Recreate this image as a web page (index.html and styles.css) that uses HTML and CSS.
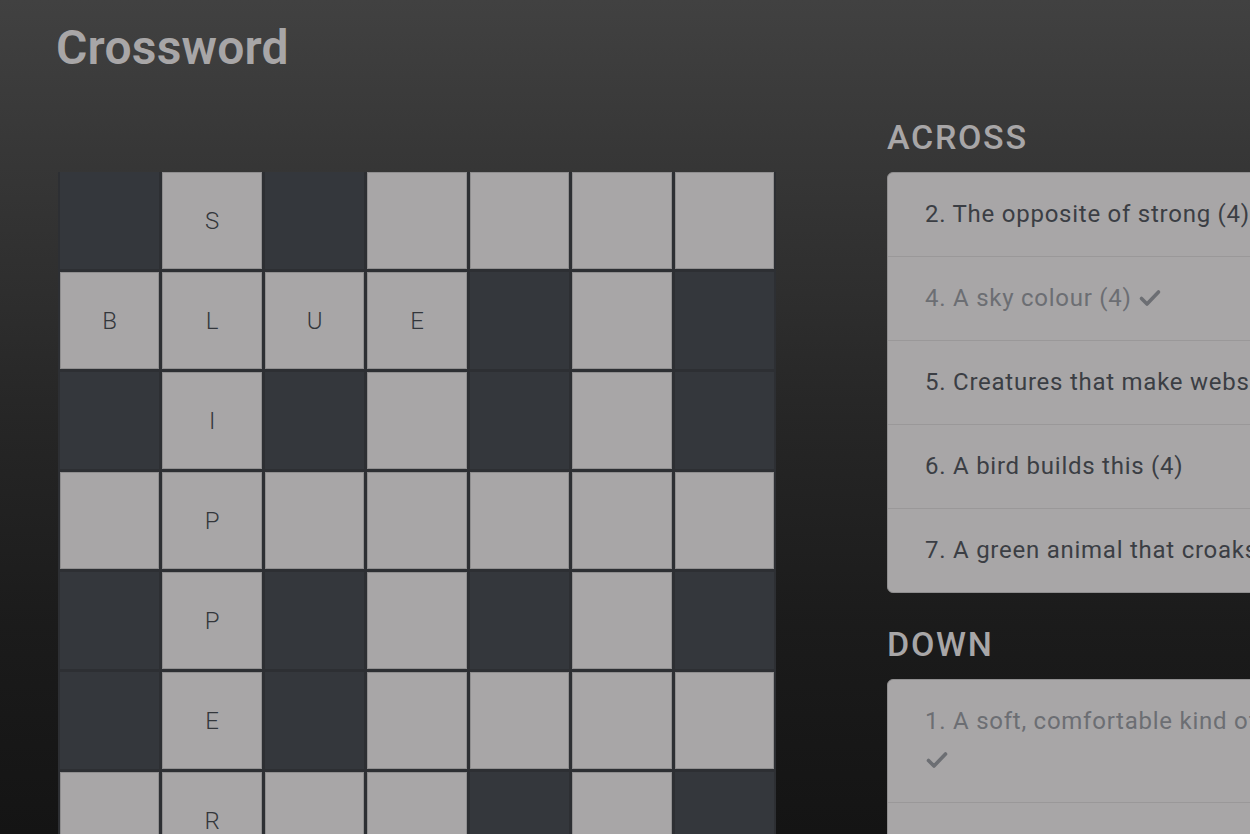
FILE: index.html
```html
<!DOCTYPE html>
<html lang="en">
<head>
<meta charset="utf-8">
<title>Crossword</title>
<link rel="stylesheet" href="styles.css">
</head>
<body>
<div class="page">
  <h1 class="title">Crossword</h1>
  <div class="main">
    <div class="board">
      <div class="cell block"></div><div class="cell">S</div><div class="cell block"></div><div class="cell"></div><div class="cell"></div><div class="cell"></div><div class="cell"></div>
      <div class="cell">B</div><div class="cell">L</div><div class="cell">U</div><div class="cell">E</div><div class="cell block"></div><div class="cell"></div><div class="cell block"></div>
      <div class="cell block"></div><div class="cell">I</div><div class="cell block"></div><div class="cell"></div><div class="cell block"></div><div class="cell"></div><div class="cell block"></div>
      <div class="cell"></div><div class="cell">P</div><div class="cell"></div><div class="cell"></div><div class="cell"></div><div class="cell"></div><div class="cell"></div>
      <div class="cell block"></div><div class="cell">P</div><div class="cell block"></div><div class="cell"></div><div class="cell block"></div><div class="cell"></div><div class="cell block"></div>
      <div class="cell block"></div><div class="cell">E</div><div class="cell block"></div><div class="cell"></div><div class="cell"></div><div class="cell"></div><div class="cell"></div>
      <div class="cell"></div><div class="cell">R</div><div class="cell"></div><div class="cell"></div><div class="cell block"></div><div class="cell"></div><div class="cell block"></div>
    </div>
    <div class="clues">
      <h2 class="clue-heading">ACROSS</h2>
      <ul class="clue-list">
        <li class="clue">2. The opposite of strong (4)</li>
        <li class="clue done">4. A sky colour (4) <svg class="check" viewBox="0 0 24 24" width="24" height="24"><path d="M3.5 12.5l5.5 5.5L20.5 6" fill="none" stroke="currentColor" stroke-width="3.6" stroke-linecap="round" stroke-linejoin="round"/></svg></li>
        <li class="clue">5. Creatures that make webs (7)</li>
        <li class="clue">6. A bird builds this (4)</li>
        <li class="clue">7. A green animal that croaks (4)</li>
      </ul>
      <h2 class="clue-heading">DOWN</h2>
      <ul class="clue-list">
        <li class="clue done">1. A soft, comfortable kind of shoe (7) <svg class="check" viewBox="0 0 24 24" width="24" height="24"><path d="M3.5 12.5l5.5 5.5L20.5 6" fill="none" stroke="currentColor" stroke-width="3.6" stroke-linecap="round" stroke-linejoin="round"/></svg></li>
        <li class="clue">3. A hot drink made from leaves (3)</li>
      </ul>
    </div>
  </div>
</div>
</body>
</html>
```

FILE: styles.css
```css
html, body {
  margin: 0;
  height: 834px;
  overflow: hidden;
}

body {
  background: linear-gradient(180deg, #414141 0%, #363636 20%, #262626 50%, #1b1b1b 75%, #141414 100%);
  font-family: Roboto, "Liberation Sans", sans-serif;
  color: #a8a6a7;
}

.page {
  padding: 20px 0 0 56px;
  width: 1400px;
}

.title {
  margin: 0;
  font-size: 48px;
  line-height: 56px;
  font-weight: 600;
  letter-spacing: 0.2px;
  color: #a8a6a7;
}

.main {
  display: flex;
  align-items: flex-start;
  gap: 111px;
  margin-top: 41px;
}

.board {
  margin-top: 55px;
  margin-left: 2px;
  width: 714px;
  padding: 0 2px 2px 2px;
  display: grid;
  grid-template-columns: repeat(7, 1fr);
  grid-auto-rows: 97px;
  gap: 3px;
  background: #2d2f33;
  flex: none;
}

.cell {
  background: #a8a6a7;
  box-shadow: inset 0 0 0 1px #8f8e8f;
  display: flex;
  align-items: center;
  justify-content: center;
  font-size: 24px;
  font-weight: 300;
  color: #33363b;
}

.cell.block {
  background: #34373c;
  box-shadow: none;
}

.clues {
  width: 528px;
  flex: none;
}

.clue-heading {
  margin: 0 0 15px;
  font-size: 34px;
  line-height: 40px;
  font-weight: 500;
  letter-spacing: 1.7px;
  color: #a8a6a7;
}

.clue-list {
  list-style: none;
  margin: 0 0 31px;
  padding: 0;
  background: #a8a6a7;
  border: 1px solid #8f8e8f;
  border-radius: 6px;
}

.clue {
  padding: 22px 37px;
  font-size: 24px;
  line-height: 39px;
  letter-spacing: 0.75px;
  color: #3b3e44;
}

.clue + .clue {
  border-top: 1px solid #9a9899;
}

.clue.done {
  color: #6c6e73;
}

.check {
  vertical-align: -4px;
}
```
